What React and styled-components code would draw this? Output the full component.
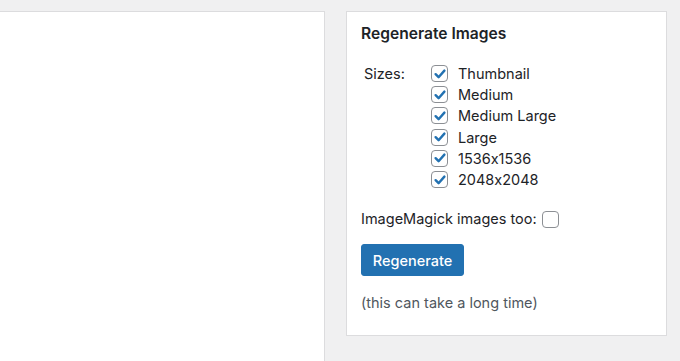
import React, { useState } from "react";
import styled, { createGlobalStyle } from "styled-components";

const sizes = [
  "Thumbnail",
  "Medium",
  "Medium Large",
  "Large",
  "1536x1536",
  "2048x2048",
];

const GlobalStyle = createGlobalStyle`
  body {
    margin: 0;
    background: #f0f0f1;
    font-family: Inter, "Liberation Sans", Arial, sans-serif;
    font-feature-settings: "calt" 0;
    color: #1d2327;
  }
`;

const Check = ({ checked, onChange }) => (
  <Box type="button" onClick={onChange} aria-checked={checked} role="checkbox">
    {checked && (
      <svg width="14" height="14" viewBox="0 0 14 14">
        <path
          d="M2.6 7.2 L5.6 10.2 L11.4 3.6"
          fill="none"
          stroke="#2271b1"
          strokeWidth="2.4"
          strokeLinecap="round"
          strokeLinejoin="round"
        />
      </svg>
    )}
  </Box>
);

const App = () => {
  const [selected, setSelected] = useState(sizes.map(() => true));
  const [magick, setMagick] = useState(false);

  const toggle = (i) => {
    setSelected(selected.map((v, j) => (j === i ? !v : v)));
  };

  return (
    <Page>
      <GlobalStyle />
      <MainPanel />
      <Card>
        <Title>Regenerate Images</Title>
        <SizesRow>
          <SizesLabel>Sizes:</SizesLabel>
          <SizeList>
            {sizes.map((s, i) => (
              <SizeItem key={s}>
                <Check checked={selected[i]} onChange={() => toggle(i)} />
                <span>{s}</span>
              </SizeItem>
            ))}
          </SizeList>
        </SizesRow>
        <MagickRow>
          ImageMagick images too:
          <Check checked={magick} onChange={() => setMagick(!magick)} />
        </MagickRow>
        <Button>Regenerate</Button>
        <Note>(this can take a long time)</Note>
      </Card>
    </Page>
  );
};

const Page = styled.div`
  display: flex;
  align-items: flex-start;
  padding-top: 11px;
  height: 361px;
  box-sizing: border-box;
  overflow: hidden;
`;

const MainPanel = styled.div`
  width: 326px;
  margin-left: -1px;
  height: 360px;
  background: #fff;
  border: 1px solid #dcdcde;
  border-bottom: none;
  box-sizing: border-box;
  flex-shrink: 0;
`;

const Card = styled.div`
  margin-left: 21px;
  width: 321px;
  height: 325px;
  background: #fff;
  border: 1px solid #dcdcde;
  box-sizing: border-box;
  padding: 12px 14px;
  display: flex;
  flex-direction: column;
  align-items: flex-start;
`;

const Title = styled.h2`
  margin: 0;
  font-size: 15.6px;
  font-weight: 600;
  line-height: 19px;
`;

const SizesRow = styled.div`
  display: flex;
  margin-top: 20px;
  margin-left: 3px;
`;

const SizesLabel = styled.div`
  width: 67px;
  font-size: 14.5px;
  line-height: 21px;
`;

const SizeList = styled.div`
  display: flex;
  flex-direction: column;
`;

const SizeItem = styled.label`
  display: flex;
  align-items: center;
  gap: 10px;
  height: 21.2px;
  font-size: 14.5px;
`;

const Box = styled.button`
  width: 17px;
  height: 17px;
  padding: 0;
  border: 1px solid #8c8f94;
  border-radius: 4px;
  background: #fff;
  display: flex;
  align-items: center;
  justify-content: center;
  cursor: pointer;
  flex-shrink: 0;
`;

const MagickRow = styled.label`
  display: flex;
  align-items: center;
  gap: 5px;
  margin-top: 19px;
  font-size: 14.5px;
  line-height: 20px;
`;

const Button = styled.button`
  margin-top: 15px;
  width: 103px;
  height: 32px;
  background: #2271b1;
  color: #fff;
  border: 1px solid #2271b1;
  border-radius: 3px;
  font-family: inherit;
  font-size: 14.5px;
  font-weight: 500;
  cursor: pointer;
`;

const Note = styled.p`
  margin: 17px 0 0;
  color: #50575e;
  font-size: 14.5px;
  line-height: 20px;
`;

export default App;
